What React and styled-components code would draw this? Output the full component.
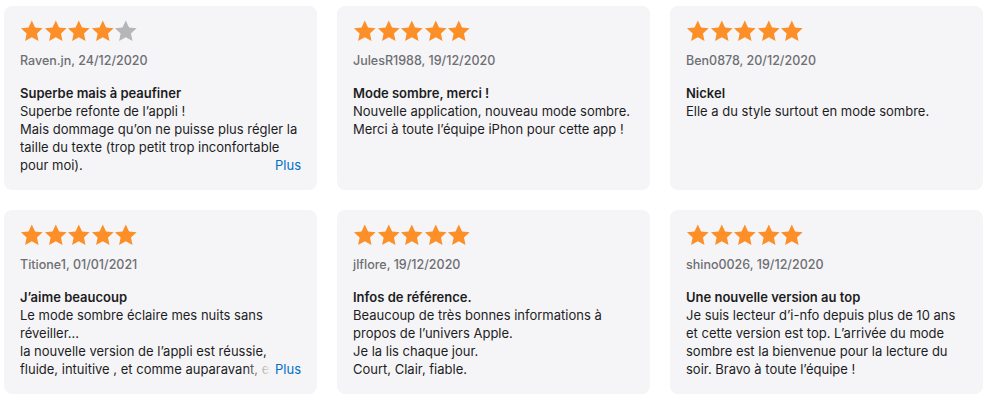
import React from 'react';
import styled, { createGlobalStyle } from 'styled-components';

const GlobalStyle = createGlobalStyle`
  body {
    margin: 0;
    background: #fff;
    font-family: Inter, "Liberation Sans", sans-serif;
    -webkit-font-smoothing: antialiased;
  }
`;

const Grid = styled.div`
  display: grid;
  grid-template-columns: repeat(3, 313px);
  grid-auto-rows: 184px;
  gap: 20px;
  padding: 6px 0 0 4px;
`;

const Card = styled.article`
  position: relative;
  background: #f5f5f7;
  border-radius: 8px;
  padding: 14px 12px 0 16px;
  box-sizing: border-box;
  overflow: hidden;
`;

const Stars = styled.div`
  display: flex;
  height: 23px;
`;

const Star = styled.svg`
  width: 23.6px;
  height: 23px;
  fill: ${(p) => (p.$on ? '#fc8f28' : '#b6b6b9')};
`;

const Meta = styled.div`
  margin-top: 9px;
  font-size: 12.5px;
  line-height: 18px;
  color: #6e6e73;
  font-weight: 500;
`;

const Title = styled.h3`
  margin: 14px 0 0 0;
  font-size: 13px;
  line-height: 18px;
  font-weight: 600;
  color: #1d1d1f;
`;

const Body = styled.p`
  margin: 0;
  font-size: 13px;
  line-height: 18px;
  color: #1d1d1f;
  max-height: 72px;
  overflow: hidden;
  white-space: pre-line;
`;

const More = styled.button`
  position: absolute;
  right: 16px;
  top: 150px;
  height: 18px;
  padding: 0 0 0 30px;
  border: none;
  background: linear-gradient(to right, rgba(245, 245, 247, 0) 0, #f5f5f7 26px);
  font-family: inherit;
  font-size: 13px;
  line-height: 18px;
  color: #0070c9;
  cursor: pointer;
`;

const reviews = [
  {
    rating: 4,
    author: 'Raven.jn, 24/12/2020',
    title: 'Superbe mais à peaufiner',
    text: "Superbe refonte de l’appli !\nMais dommage qu’on ne puisse plus régler la\ntaille du texte (trop petit trop inconfortable\npour moi).",
    more: true,
  },
  {
    rating: 5,
    author: 'JulesR1988, 19/12/2020',
    title: 'Mode sombre, merci !',
    text: "Nouvelle application, nouveau mode sombre.\nMerci à toute l’équipe iPhon pour cette app !",
  },
  {
    rating: 5,
    author: 'Ben0878, 20/12/2020',
    title: 'Nickel',
    text: 'Elle a du style surtout en mode sombre.',
  },
  {
    rating: 5,
    author: 'Titione1, 01/01/2021',
    title: 'J’aime beaucoup',
    text: "Le mode sombre éclaire mes nuits sans\nréveiller...\nla nouvelle version de l’appli est réussie,\nfluide, intuitive , et comme auparavant, elle",
    more: true,
  },
  {
    rating: 5,
    author: 'jlflore, 19/12/2020',
    title: 'Infos de référence.',
    text: "Beaucoup de très bonnes informations à\npropos de l’univers Apple.\nJe la lis chaque jour.\nCourt, Clair, fiable.",
  },
  {
    rating: 5,
    author: 'shino0026, 19/12/2020',
    title: 'Une nouvelle version au top',
    text: "Je suis lecteur d’i-nfo depuis plus de 10 ans\net cette version est top. L’arrivée du mode\nsombre est la bienvenue pour la lecture du\nsoir. Bravo à toute l’équipe !",
  },
];

const StarIcon = ({ on }) => (
  <Star $on={on} viewBox="0 0 24 24">
    <polygon points="12,0.6 15.4,7.8 23.3,8.7 17.4,14 19,22 12,18 5,22 6.6,14 0.7,8.7 8.6,7.8" />
  </Star>
);

const Review = ({ review }) => (
  <Card>
    <Stars>
      {[1, 2, 3, 4, 5].map((n) => (
        <StarIcon key={n} on={n <= review.rating} />
      ))}
    </Stars>
    <Meta>{review.author}</Meta>
    <Title>{review.title}</Title>
    <Body>{review.text}</Body>
    {review.more && <More>Plus</More>}
  </Card>
);

const App = () => (
  <>
    <GlobalStyle />
    <Grid>
      {reviews.map((r) => (
        <Review key={r.author} review={r} />
      ))}
    </Grid>
  </>
);

export default App;
